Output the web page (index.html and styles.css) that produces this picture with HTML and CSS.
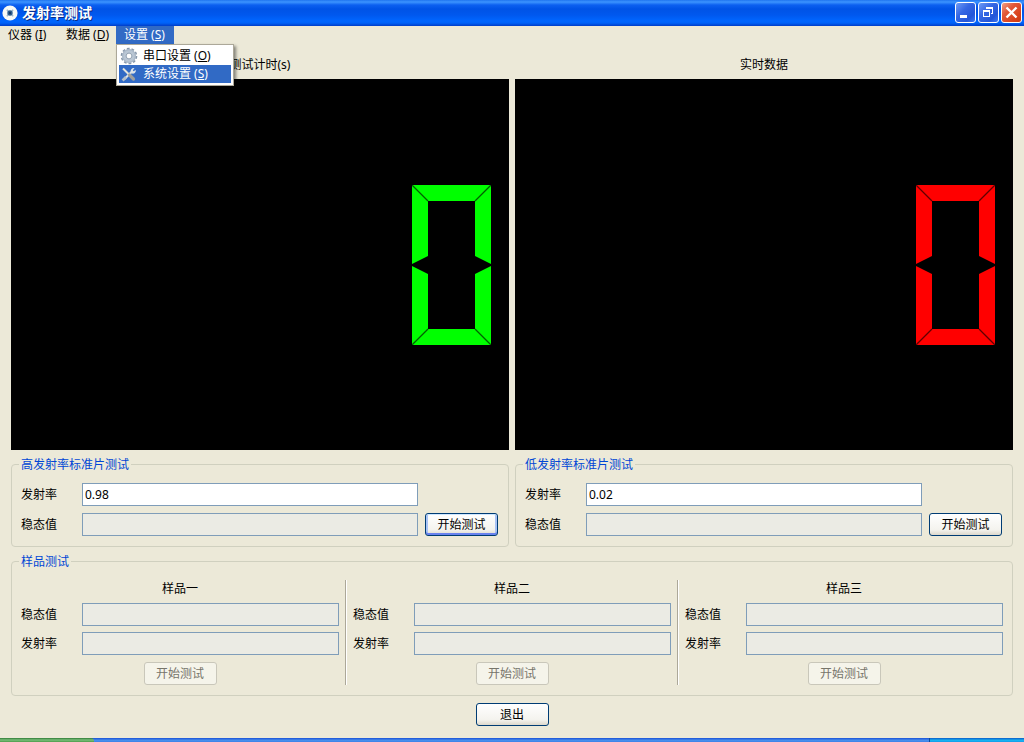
FILE: index.html
```html
<!DOCTYPE html>
<html lang="zh-CN">
<head>
<meta charset="utf-8">
<title>发射率测试</title>
<link rel="stylesheet" href="styles.css">
</head>
<body>
<header class="titlebar">
  <svg class="app-icon" width="16" height="16" viewBox="0 0 16 16" aria-hidden="true">
    <circle cx="8" cy="8" r="7.6" fill="#f8faf6"/>
    <path d="M4.800 4.800l6.400 6.400M11.200 4.800l-6.400 6.400" stroke="#9fb8cc" stroke-width="1.400"/>
    <circle cx="8" cy="8" r="2.700" fill="#2f608f"/>
    <circle cx="8" cy="8" r="1.200" fill="#173a63"/>
  </svg>
  <h1 class="title">发射率测试</h1>
  <div class="window-buttons">
    <button class="win-btn" aria-label="最小化"><svg width="19" height="19" viewBox="0 0 19 19"><path d="M4 12h7v3H4z" fill="#fff"/></svg></button>
    <button class="win-btn" aria-label="还原"><svg width="19" height="19" viewBox="0 0 19 19" fill="#fff"><path d="M7 4h7v7h-2v-1h1V6H7z"/><path fill-rule="evenodd" d="M4 7h7v7H4zM5 9v4h5V9z"/></svg></button>
    <button class="win-btn win-close" aria-label="关闭"><svg width="19" height="19" viewBox="0 0 19 19"><path d="M4.500 4.500l10 10M14.500 4.500l-10 10" stroke="#fff" stroke-width="2.400"/></svg></button>
  </div>
</header>

<nav class="menubar">
  <button class="menu">仪器<span class="key">(<u>I</u>)</span></button>
  <button class="menu">数据<span class="key">(<u>D</u>)</span></button>
  <div class="menu-wrap">
    <button class="menu menu-open">设置<span class="key">(<u>S</u>)</span></button>
    <div class="dropdown">
      <button class="option">
        <svg width="18" height="18" viewBox="0 0 18 18" aria-hidden="true">
          <circle cx="9" cy="9" r="7.300" fill="none" stroke="#8797aa" stroke-width="2" stroke-dasharray="2.700 1.887"/>
          <circle cx="9" cy="9" r="5" fill="none" stroke="#b9c6d4" stroke-width="4"/>
          <circle cx="9" cy="9" r="6.300" fill="none" stroke="#a0afc0" stroke-width=".8"/>
          <circle cx="9" cy="9" r="2.900" fill="#fff" stroke="#8797aa" stroke-width=".9"/>
        </svg>
        <span>串口设置<span class="key">(<u>O</u>)</span></span>
      </button>
      <button class="option option-active">
        <svg width="18" height="18" viewBox="0 0 18 18" aria-hidden="true">
          <path d="M4.500 14L12 6.500" stroke="#dce3e8" stroke-width="2.200"/>
          <path d="M11 7.500a3 3 0 0 1 3.500-4.300l-1.700 2 .9 1 2-1.500a3 3 0 0 1-4.200 3.600z" fill="#dce3e8"/>
          <path d="M3 3.500L9.500 10" stroke="#e4e4dc" stroke-width="2"/>
          <path d="M9.500 10l4 4" stroke="#9e9f9d" stroke-width="3.200" stroke-linecap="round"/>
          <path d="M2.600 15.400L6 12" stroke="#b5bfc9" stroke-width="2.800"/>
        </svg>
        <span>系统设置<span class="key">(<u>S</u>)</span></span>
      </button>
    </div>
  </div>
</nav>

<main class="content">
  <div class="pair displays">
    <section class="display">
      <h2 class="caption">测试计时(s)</h2>
      <div class="lcd lcd-green">
        <svg width="79" height="160" viewBox="0 0 79 160" role="img" aria-label="0">
          <path class="segment" d="M0 0h79v79l-16-8V16H16v55L0 79zM0 81l16 8v55h47V89l16-8v79H0z"/>
          <path class="seam" d="M0 0l16 16M79 0L63 16M0 160l16-16M79 160l-16-16"/>
        </svg>
      </div>
    </section>
    <section class="display">
      <h2 class="caption">实时数据</h2>
      <div class="lcd lcd-red">
        <svg width="79" height="160" viewBox="0 0 79 160" role="img" aria-label="0">
          <path class="segment" d="M0 0h79v79l-16-8V16H16v55L0 79zM0 81l16 8v55h47V89l16-8v79H0z"/>
          <path class="seam" d="M0 0l16 16M79 0L63 16M0 160l16-16M79 160l-16-16"/>
        </svg>
      </div>
    </section>
  </div>

  <div class="pair">
    <fieldset class="group">
      <legend>高发射率标准片测试</legend>
      <div class="standard">
        <label for="high-rate">发射率</label>
        <input class="field" id="high-rate" type="text" value="0.98">
        <label class="second-row" for="high-stable">稳态值</label>
        <input class="field" id="high-stable" type="text" disabled>
        <button class="btn btn-default">开始测试</button>
      </div>
    </fieldset>
    <fieldset class="group">
      <legend>低发射率标准片测试</legend>
      <div class="standard">
        <label for="low-rate">发射率</label>
        <input class="field" id="low-rate" type="text" value="0.02">
        <label class="second-row" for="low-stable">稳态值</label>
        <input class="field" id="low-stable" type="text" disabled>
        <button class="btn">开始测试</button>
      </div>
    </fieldset>
  </div>

  <fieldset class="group">
    <legend>样品测试</legend>
    <div class="samples">
      <section class="sample">
        <h3 class="sample-name">样品一</h3>
        <label for="s1-stable">稳态值</label><input class="field" id="s1-stable" type="text" disabled>
        <label for="s1-rate">发射率</label><input class="field" id="s1-rate" type="text" disabled>
        <button class="btn sample-start" disabled>开始测试</button>
      </section>
      <div class="separator"></div>
      <section class="sample">
        <h3 class="sample-name">样品二</h3>
        <label for="s2-stable">稳态值</label><input class="field" id="s2-stable" type="text" disabled>
        <label for="s2-rate">发射率</label><input class="field" id="s2-rate" type="text" disabled>
        <button class="btn sample-start" disabled>开始测试</button>
      </section>
      <div class="separator"></div>
      <section class="sample">
        <h3 class="sample-name">样品三</h3>
        <label for="s3-stable">稳态值</label><input class="field" id="s3-stable" type="text" disabled>
        <label for="s3-rate">发射率</label><input class="field" id="s3-rate" type="text" disabled>
        <button class="btn sample-start" disabled>开始测试</button>
      </section>
    </div>
  </fieldset>

  <div class="actions"><button class="btn">退出</button></div>
</main>

<footer class="taskbar">
  <div class="start-edge"></div>
  <div class="tray-edge"></div>
</footer>
</body>
</html>
```
FILE: styles.css
```css
* { box-sizing: border-box; }

body {
  margin: 0;
  min-height: 100vh;
  display: flex;
  flex-direction: column;
  background: #ece9d8;
  color: #000;
  font: 12px/14px "Noto Sans", "Noto Sans CJK SC", sans-serif;
}

button, input { font: inherit; color: inherit; }
h1, h2, h3 { margin: 0; font-size: 12px; font-weight: normal; }

/* Title bar */
.titlebar {
  display: flex;
  align-items: center;
  gap: 4px;
  height: 26px;
  padding: 0 2px 1px;
  background: linear-gradient(#1f75f0 0, #3c94ff 2px, #0c60f0 5px, #0053e6 9px, #0058ee 15px, #0066ff 21px, #0062f8 23px, #003dc8 26px);
}
.title {
  flex: 1;
  color: #fff;
  font-size: 14px;
  line-height: 20px;
  font-weight: bold;
  text-shadow: 1px 1px #0a2a84;
}
.window-buttons { display: flex; gap: 2px; }
.win-btn {
  width: 21px;
  height: 21px;
  padding: 0;
  border: 1px solid #fff;
  border-radius: 3px;
  background: linear-gradient(135deg, #6f9bf5 0, #3567e4 40%, #2456d8 75%, #3c78f4 100%);
}
.win-btn svg { display: block; }
.win-close { background: linear-gradient(135deg, #f0a088 0, #e2593a 35%, #d9421c 75%, #c83c14 100%); }

/* Menu bar */
.menubar { display: flex; height: 18px; }
.menu-wrap { position: relative; }
.menu {
  width: 58px;
  height: 18px;
  padding: 0 0 0 8px;
  border: 0;
  background: none;
  line-height: 18px;
  text-align: left;
  white-space: nowrap;
}
.menu-open { background: #316ac5; color: #fff; }
.key { margin-left: 3px; }
.dropdown {
  position: absolute;
  z-index: 1;
  top: 100%;
  left: 0;
  width: 118px;
  padding: 2px;
  border: 1px solid #aca899;
  background: #fff;
  box-shadow: 2px 2px 3px rgba(0, 0, 0, .45);
}
.option {
  display: flex;
  align-items: center;
  gap: 5px;
  width: 100%;
  height: 18px;
  padding: 0 1px;
  border: 0;
  background: #fff;
  line-height: 18px;
  white-space: nowrap;
}
.option-active { background: #316ac5; color: #fff; }

/* Content */
.content {
  flex: 1;
  display: flex;
  flex-direction: column;
  gap: 7px;
  padding: 6px 11px 12px;
}
.pair { display: grid; grid-template-columns: 1fr 1fr; gap: 6px; }
.displays { flex: 1; }
.display { display: flex; flex-direction: column; }
.caption { line-height: 29px; text-align: center; }
.lcd {
  flex: 1;
  display: flex;
  align-items: center;
  justify-content: flex-end;
  padding-right: 18px;
  background: #000;
}
.seam { fill: none; stroke-width: 1.3; }
.lcd-green .segment { fill: #0f0; }
.lcd-green .seam { stroke: #006000; }
.lcd-red .segment { fill: #f00; }
.lcd-red .seam { stroke: #600000; }

.group {
  min-width: 0;
  margin: 0;
  padding: 11px 9px 10px;
  border: 1px solid #d0d0bf;
  border-radius: 4px;
}
.group legend { padding: 1px 2px 0; margin-left: -2px; color: #0046d5; }

.standard {
  display: grid;
  grid-template-columns: 61px 1fr 73px;
  grid-auto-rows: 23px;
  row-gap: 7px;
  align-items: center;
  padding-right: 1px;
}
.standard .field { width: auto; margin-right: 7px; }
.second-row { grid-column: 1; }

.field {
  width: 100%;
  min-width: 0;
  height: 23px;
  padding: 0 2px;
  border: 1px solid #7f9db9;
  border-radius: 0;
  background: #fff;
}
.field:disabled { background: #ebebe4; }

.btn {
  width: 73px;
  height: 23px;
  padding: 0;
  border: 1px solid #003c74;
  border-radius: 3px;
  background: linear-gradient(#fff, #f4f3ee 75%, #dcd8cc);
}
.btn-default { box-shadow: inset 0 1px #cee7ff, inset 0 -2px #6982ee, inset 2px 0 #a9c3f5, inset -2px 0 #a9c3f5; }
.btn:disabled { border-color: #c9c7ba; background: #f5f4ea; color: #77756a; }

.samples { display: grid; grid-template-columns: 1fr 2px 1fr 2px 1fr; gap: 6px; }
.sample {
  display: grid;
  grid-template-columns: 61px 1fr;
  grid-template-rows: 17px 23px 23px 24px;
  row-gap: 6px;
  align-items: center;
}
.sample-name, .sample-start { grid-column: 1 / -1; justify-self: center; }
.sample-start { align-self: end; }
.separator { border-left: 1px solid #aca899; border-right: 1px solid #fff; }

.actions .btn { display: block; margin: 0 auto; }

/* Top edge of the desktop taskbar */
.taskbar {
  display: flex;
  justify-content: space-between;
  height: 4px;
  background: linear-gradient(#245edb 0 1px, #4b93ee 2px, #3c81e8 4px);
}
.start-edge { width: 94px; background: linear-gradient(#2f7a35, #7bbf7b 50%, #4b9c4b); border-radius: 0 3px 0 0; }
.tray-edge { width: 95px; border-left: 1px solid #0a4a9c; background: linear-gradient(#0e6ed0 0 1px, #18b9f4 2px, #129be8); }
```
